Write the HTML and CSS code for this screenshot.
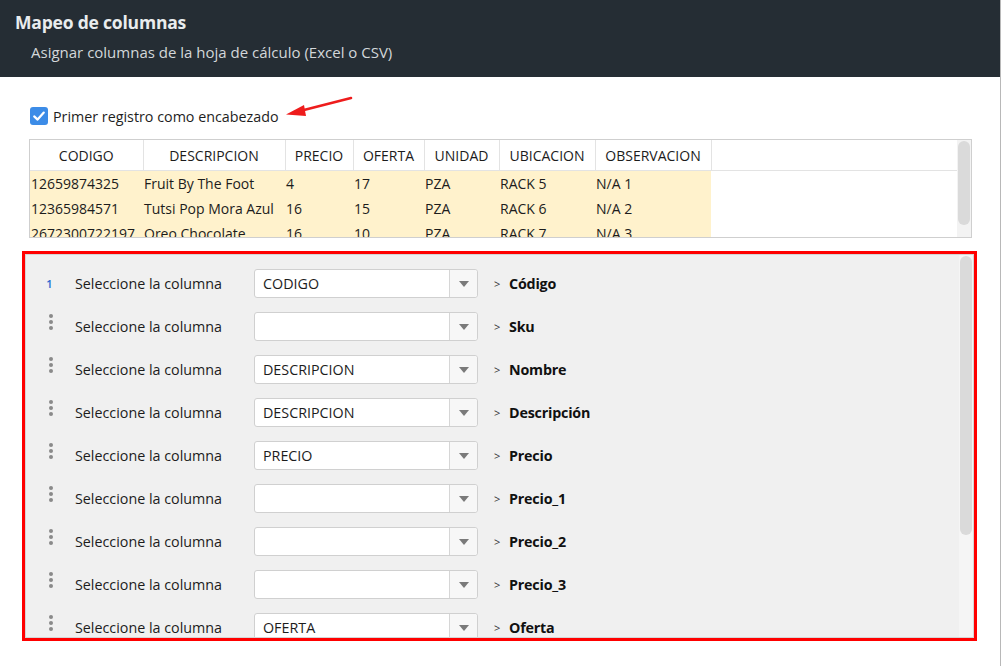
FILE: index.html
```html
<!DOCTYPE html>
<html lang="es">
<head>
<meta charset="utf-8">
<title>Mapeo de columnas</title>
<link rel="stylesheet" href="styles.css">
</head>
<body>
<div class="page">
  <header class="header">
    <h1 class="title">Mapeo de columnas</h1>
    <p class="subtitle">Asignar columnas de la hoja de cálculo (Excel o CSV)</p>
  </header>

  <div class="check-row">
    <span class="checkbox">
      <svg viewBox="0 0 18 18" width="18" height="18"><rect x="0" y="0" width="18" height="18" rx="3" fill="#3c8ce7"/><path d="M4.2 9.4 L7.6 12.6 L13.8 5.6" fill="none" stroke="#fff" stroke-width="2.2" stroke-linecap="round" stroke-linejoin="round"/></svg>
    </span>
    <span class="check-label">Primer registro como encabezado</span>
    <svg class="arrow" viewBox="0 0 70 24" width="70" height="24"><line x1="67" y1="2" x2="14" y2="15.5" stroke="#ee1c1c" stroke-width="2.6" stroke-linecap="round"/><polygon points="2,18.5 20,9 22,20" fill="#ee1c1c"/></svg>
  </div>

  <div class="grid">
    <div class="grid-body">
      <table class="sheet">
        <thead>
          <tr>
            <th class="c1">CODIGO</th><th class="c2">DESCRIPCION</th><th class="c3">PRECIO</th><th class="c4">OFERTA</th><th class="c5">UNIDAD</th><th class="c6">UBICACION</th><th class="c7">OBSERVACION</th><th class="cfill"></th>
          </tr>
        </thead>
        <tbody>
          <tr><td>12659874325</td><td>Fruit By The Foot</td><td>4</td><td>17</td><td>PZA</td><td>RACK 5</td><td>N/A 1</td><td class="cfill"></td></tr>
          <tr><td>12365984571</td><td>Tutsi Pop Mora Azul</td><td>16</td><td>15</td><td>PZA</td><td>RACK 6</td><td>N/A 2</td><td class="cfill"></td></tr>
          <tr><td>2672300722197</td><td>Oreo Chocolate</td><td>16</td><td>10</td><td>PZA</td><td>RACK 7</td><td>N/A 3</td><td class="cfill"></td></tr>
        </tbody>
      </table>
    </div>
    <div class="scroll small"><div class="thumb"></div></div>
  </div>

  <div class="mapping">
    <div class="mapping-inner">
      <div class="rows">
        <div class="row"><span class="handle num">1</span><span class="lbl">Seleccione la columna</span><span class="select"><span class="sel-val">CODIGO</span><span class="sel-btn"><i class="tri"></i></span></span><span class="gt">&gt;</span><b class="target">Código</b></div>
        <div class="row"><span class="handle"><i></i><i></i><i></i></span><span class="lbl">Seleccione la columna</span><span class="select"><span class="sel-val"></span><span class="sel-btn"><i class="tri"></i></span></span><span class="gt">&gt;</span><b class="target">Sku</b></div>
        <div class="row"><span class="handle"><i></i><i></i><i></i></span><span class="lbl">Seleccione la columna</span><span class="select"><span class="sel-val">DESCRIPCION</span><span class="sel-btn"><i class="tri"></i></span></span><span class="gt">&gt;</span><b class="target">Nombre</b></div>
        <div class="row"><span class="handle"><i></i><i></i><i></i></span><span class="lbl">Seleccione la columna</span><span class="select"><span class="sel-val">DESCRIPCION</span><span class="sel-btn"><i class="tri"></i></span></span><span class="gt">&gt;</span><b class="target">Descripción</b></div>
        <div class="row"><span class="handle"><i></i><i></i><i></i></span><span class="lbl">Seleccione la columna</span><span class="select"><span class="sel-val">PRECIO</span><span class="sel-btn"><i class="tri"></i></span></span><span class="gt">&gt;</span><b class="target">Precio</b></div>
        <div class="row"><span class="handle"><i></i><i></i><i></i></span><span class="lbl">Seleccione la columna</span><span class="select"><span class="sel-val"></span><span class="sel-btn"><i class="tri"></i></span></span><span class="gt">&gt;</span><b class="target">Precio_1</b></div>
        <div class="row"><span class="handle"><i></i><i></i><i></i></span><span class="lbl">Seleccione la columna</span><span class="select"><span class="sel-val"></span><span class="sel-btn"><i class="tri"></i></span></span><span class="gt">&gt;</span><b class="target">Precio_2</b></div>
        <div class="row"><span class="handle"><i></i><i></i><i></i></span><span class="lbl">Seleccione la columna</span><span class="select"><span class="sel-val"></span><span class="sel-btn"><i class="tri"></i></span></span><span class="gt">&gt;</span><b class="target">Precio_3</b></div>
        <div class="row"><span class="handle"><i></i><i></i><i></i></span><span class="lbl">Seleccione la columna</span><span class="select"><span class="sel-val">OFERTA</span><span class="sel-btn"><i class="tri"></i></span></span><span class="gt">&gt;</span><b class="target">Oferta</b></div>
        <div class="row"><span class="handle"><i></i><i></i><i></i></span><span class="lbl">Seleccione la columna</span><span class="select"><span class="sel-val"></span><span class="sel-btn"><i class="tri"></i></span></span><span class="gt">&gt;</span><b class="target">Unidad</b></div>
      </div>
      <div class="scroll big"><div class="thumb"></div></div>
    </div>
  </div>
</div>
</body>
</html>
```

FILE: styles.css
```css
* { box-sizing: border-box; }
html, body { margin: 0; padding: 0; }
body {
  width: 1002px;
  height: 666px;
  overflow: hidden;
  background: #ffffff;
  font-family: "Open Sans", "Noto Sans", sans-serif;
  color: #1a1a1a;
}
.page {
  width: 1001px;
  height: 666px;
  border-right: 1px solid #b8b8b8;
  overflow: hidden;
}
.header {
  height: 77px;
  background: #252d34;
  padding: 10px 15px 0 15px;
}
.title {
  margin: 0;
  font-size: 17.5px;
  font-weight: 700;
  color: #e9ecee;
  line-height: 24px;
  letter-spacing: -0.2px;
}
.subtitle {
  margin: 8px 0 0 16px;
  font-size: 15px;
  line-height: 20px;
  color: #d3d7da;
}

.check-row {
  position: relative;
  display: flex;
  align-items: center;
  height: 18px;
  margin: 30px 0 0 30px;
  gap: 5px;
}
.checkbox { display: block; width: 18px; height: 18px; }
.checkbox svg { display: block; }
.check-label { font-size: 14.3px; color: #1e1e1e; }
.arrow { position: absolute; left: 254px; top: -11px; }

.grid {
  display: flex;
  margin: 14px 0 0 29px;
  width: 943px;
  height: 99px;
  border: 1px solid #cfcfcf;
  background: #fff;
  overflow: hidden;
}
.grid-body { flex: 1; overflow: hidden; }
.sheet {
  border-collapse: collapse;
  width: 100%;
  table-layout: fixed;
  font-size: 14px;
}
.sheet th {
  height: 30px;
  font-weight: 400;
  color: #1c1c1c;
  text-align: center;
  border-right: 1px solid #e3e3e3;
  border-bottom: 1px solid #e3e3e3;
  padding: 2px 0 0 0;
  background: #fff;
  white-space: nowrap;
}
.sheet th.cfill { border-right: none; }
.sheet td {
  height: 25px;
  padding: 1px 0 0 1px;
  background: #fff2cc;
  color: #1c1c1c;
  white-space: nowrap;
  overflow: hidden;
}
.sheet td.cfill { background: #fff; }
.c1 { width: 113px; }
.c2 { width: 142px; }
.c3 { width: 68px; }
.c4 { width: 71px; }
.c5 { width: 75px; }
.c6 { width: 96px; }
.c7 { width: 116px; }

.scroll {
  width: 14px;
  background: #f3f3f3;
  padding: 1px 1px 0 1px;
}
.scroll .thumb {
  width: 12px;
  background: #dadada;
  border-radius: 6px;
}
.scroll.small .thumb { height: 84px; }
.scroll.big .thumb { height: 279px; }

.mapping {
  margin: 13px 0 0 22px;
  width: 955px;
  height: 390px;
  border: 3px solid #ff0000;
}
.mapping-inner {
  display: flex;
  height: 100%;
  border: 1px solid #d5d5d5;
  background: #f0f0f0;
  overflow: hidden;
}
.rows { flex: 1; padding-top: 7px; }
.scroll.big { background: #f5f5f5; padding-top: 1px; }

.row {
  display: flex;
  align-items: center;
  height: 43px;
  font-size: 14.3px;
}
.handle {
  width: 49px;
  display: flex;
  flex-direction: column;
  align-items: center;
  gap: 2px;
  padding-left: 1px;
  margin-top: -10px;
}
.handle i {
  display: block;
  width: 4px;
  height: 4px;
  border-radius: 50%;
  background: #8a8a8a;
}
.handle.num {
  margin-top: 0;
  font-size: 11px;
  font-weight: 600;
  color: #2a6bd0;
  padding-right: 3px;
}
.lbl {
  width: 179px;
  color: #1c1c1c;
}
.select {
  display: flex;
  width: 224px;
  height: 29px;
  background: #fff;
  border: 1px solid #d0d0d0;
  border-radius: 3px;
}
.sel-val {
  flex: 1;
  padding-left: 8px;
  line-height: 27px;
  font-size: 14.3px;
  color: #1c1c1c;
}
.sel-btn {
  width: 28px;
  border-left: 1px solid #d6d6d6;
  background: #f7f7f7;
  display: flex;
  align-items: center;
  justify-content: center;
  border-radius: 0 3px 3px 0;
}
.tri {
  width: 0;
  height: 0;
  border-left: 5px solid transparent;
  border-right: 5px solid transparent;
  border-top: 6px solid #7a7a7a;
}
.gt {
  margin-left: 16px;
  font-size: 11px;
  color: #333;
  width: 15px;
}
.target {
  font-size: 14.3px;
  font-weight: 700;
  color: #111;
  letter-spacing: -0.2px;
}
```
